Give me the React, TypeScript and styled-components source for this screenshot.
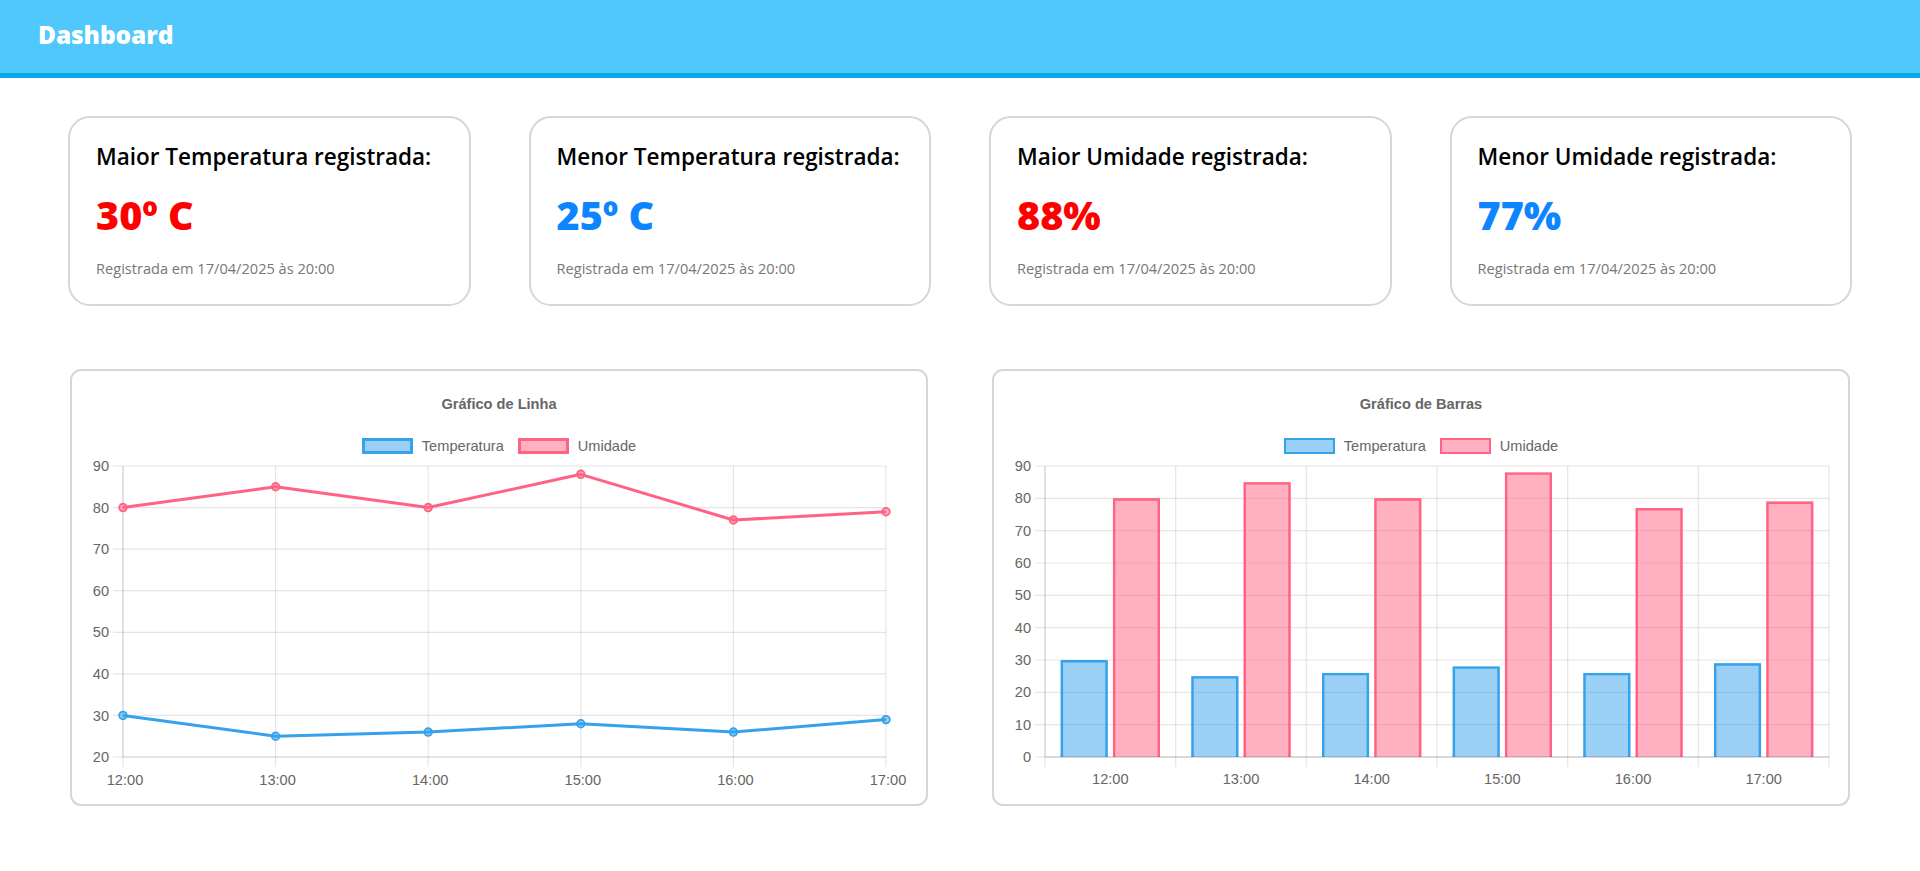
import React from "react";
import styled, { createGlobalStyle } from "styled-components";

const GlobalStyle = createGlobalStyle`
  html, body { margin: 0; padding: 0; background: #ffffff; }
  body { font-family: "Open Sans", "Liberation Sans", sans-serif; }
  * { box-sizing: border-box; }
`;

const Header = styled.header`
  height: 78px;
  background: #50c8fd;
  border-bottom: 5px solid #05aaee;
  display: flex;
  align-items: center;
  padding: 0 38px 4px;
`;

const Brand = styled.h1`
  margin: 0;
  font-family: "Open Sans", sans-serif;
  font-weight: 800;
  font-size: 24.5px;
  color: #ffffff;
  letter-spacing: -0.1px;
`;

const StatsRow = styled.section`
  display: grid;
  grid-template-columns: repeat(4, 1fr);
  gap: 58px;
  padding: 38px 68px 0;
`;

const StatCard = styled.div`
  height: 190px;
  border: 2px solid #d6d6d6;
  border-radius: 22px;
  padding: 24px 26px 0;
  display: flex;
  flex-direction: column;
`;

const StatTitle = styled.h2`
  margin: 0;
  font-family: "Open Sans", sans-serif;
  font-weight: 600;
  font-size: 22.5px;
  line-height: 30px;
  color: #000;
`;

const StatValue = styled.div<{ $tone: "hot" | "cold" }>`
  margin-top: 19px;
  font-family: "Open Sans", sans-serif;
  font-weight: 800;
  font-size: 39.5px;
  line-height: 48px;
  color: ${(p) => (p.$tone === "hot" ? "#ff0000" : "#0d85ff")};
`;

const StatNote = styled.p`
  margin: 19px 0 0;
  font-family: "Open Sans", sans-serif;
  font-size: 14.6px;
  line-height: 20px;
  color: #777;
`;

const ChartsRow = styled.section`
  display: grid;
  grid-template-columns: 858px 858px;
  justify-content: space-between;
  padding: 63px 70px 0;
`;

const ChartCard = styled.div`
  height: 437px;
  border: 2px solid #d6d6d6;
  border-radius: 11px;
  display: flex;
  flex-direction: column;
`;

const ChartTitle = styled.div`
  padding-top: 24px;
  height: 42px;
  text-align: center;
  font-family: "Liberation Sans", Arial, sans-serif;
  font-weight: 700;
  font-size: 14.6px;
  line-height: 18px;
  color: #666;
`;

const Legend = styled.div`
  margin-top: 24px;
  height: 18px;
  display: flex;
  justify-content: center;
  align-items: center;
  gap: 14px;
`;

const LegendItem = styled.div`
  display: flex;
  align-items: center;
  gap: 9px;
  font-family: "Liberation Sans", Arial, sans-serif;
  font-size: 14.6px;
  line-height: 18px;
  color: #666;
`;

const LegendBox = styled.span<{ $color: string; $fill: string; $bw: number }>`
  width: 51px;
  height: 16px;
  background: ${(p) => p.$fill};
  border: ${(p) => p.$bw}px solid ${(p) => p.$color};
`;

const Plot = styled.svg`
  display: block;
  flex: 0 0 auto;
`;

const BLUE = "rgb(54,162,235)";
const BLUE_F = "rgba(54,162,235,0.5)";
const PINK = "rgb(255,99,132)";
const PINK_F = "rgba(255,99,132,0.5)";
const GRID = "rgba(0,0,0,0.1)";
const TICK = "#666";

const labels = ["12:00", "13:00", "14:00", "15:00", "16:00", "17:00"];
const temps = [30, 25, 26, 28, 26, 29];
const hums = [80, 85, 80, 88, 77, 79];

const stats = [
  { title: "Maior Temperatura registrada:", value: "30º C", tone: "hot" as const },
  { title: "Menor Temperatura registrada:", value: "25º C", tone: "cold" as const },
  { title: "Maior Umidade registrada:", value: "88%", tone: "hot" as const },
  { title: "Menor Umidade registrada:", value: "77%", tone: "cold" as const },
];

const SVG_W = 854;
const SVG_H = 349;
const TOP = 11;
const BOTTOM = 302;
const TICK_LEN = 10;
const FONT = '"Liberation Sans", Arial, sans-serif';

function LineChart() {
  const left = 51;
  const right = 814;
  const min = 20;
  const max = 90;
  const y = (v: number) => TOP + ((max - v) / (max - min)) * (BOTTOM - TOP);
  const x = (i: number) => left + (i * (right - left)) / 5;
  const ticks = [20, 30, 40, 50, 60, 70, 80, 90];
  const path = (d: number[]) => d.map((v, i) => `${i ? "L" : "M"}${x(i)},${y(v)}`).join(" ");
  return (
    <Plot width={SVG_W} height={SVG_H} viewBox={`0 0 ${SVG_W} ${SVG_H}`}>
      {ticks.map((t) => (
        <g key={t}>
          <line x1={left - TICK_LEN} x2={right} y1={y(t)} y2={y(t)} stroke={GRID} strokeWidth={1.2} />
          <text x={left - 14} y={y(t)} dy="0.35em" textAnchor="end" fontFamily={FONT} fontSize={14.6} fill={TICK}>
            {t}
          </text>
        </g>
      ))}
      {labels.map((l, i) => (
        <g key={l}>
          <line x1={x(i)} x2={x(i)} y1={TOP} y2={BOTTOM + TICK_LEN} stroke={GRID} strokeWidth={1.2} />
          <text x={x(i) + 2} y={BOTTOM + 23} dy="0.35em" textAnchor="middle" fontFamily={FONT} fontSize={14.6} fill={TICK}>
            {l}
          </text>
        </g>
      ))}
      <line x1={left} x2={left} y1={TOP} y2={BOTTOM} stroke={GRID} strokeWidth={1.2} />
      <line x1={left} x2={right} y1={BOTTOM} y2={BOTTOM} stroke={GRID} strokeWidth={1.2} />
      <path d={path(hums)} fill="none" stroke={PINK} strokeWidth={3} strokeLinejoin="round" />
      <path d={path(temps)} fill="none" stroke={BLUE} strokeWidth={3} strokeLinejoin="round" />
      {hums.map((v, i) => (
        <circle key={`h${i}`} cx={x(i)} cy={y(v)} r={3.8} fill={PINK_F} stroke={PINK} strokeWidth={1.8} />
      ))}
      {temps.map((v, i) => (
        <circle key={`t${i}`} cx={x(i)} cy={y(v)} r={3.8} fill={BLUE_F} stroke={BLUE} strokeWidth={1.8} />
      ))}
    </Plot>
  );
}

function BarChart() {
  const left = 51;
  const right = 835;
  const max = 90;
  const y = (v: number) => TOP + ((max - v) / max) * (BOTTOM - TOP);
  const cat = (right - left) / 6;
  const slot = (cat * 0.8) / 2;
  const bw = slot * 0.9;
  const ticks = [0, 10, 20, 30, 40, 50, 60, 70, 80, 90];
  const bar = (i: number, s: number, v: number, stroke: string, fill: string) => {
    const bx = left + i * cat + cat * 0.1 + s * slot + (slot - bw) / 2;
    const by = y(v);
    const h = BOTTOM - by;
    const b = 1.2;
    return (
      <g key={`${i}-${s}`}>
        <rect x={bx} y={by} width={bw} height={h} fill={fill} />
        <path
          d={`M${bx + b},${BOTTOM} L${bx + b},${by + b} L${bx + bw - b},${by + b} L${bx + bw - b},${BOTTOM}`}
          fill="none"
          stroke={stroke}
          strokeWidth={2.4}
        />
      </g>
    );
  };
  return (
    <Plot width={SVG_W} height={SVG_H} viewBox={`0 0 ${SVG_W} ${SVG_H}`}>
      {ticks.map((t) => (
        <g key={t}>
          <line x1={left - TICK_LEN} x2={right} y1={y(t)} y2={y(t)} stroke={GRID} strokeWidth={1.2} />
          <text x={left - 14} y={y(t)} dy="0.35em" textAnchor="end" fontFamily={FONT} fontSize={14.6} fill={TICK}>
            {t}
          </text>
        </g>
      ))}
      {Array.from({ length: 7 }).map((_, i) => (
        <line
          key={`v${i}`}
          x1={left + i * cat}
          x2={left + i * cat}
          y1={TOP}
          y2={BOTTOM + TICK_LEN}
          stroke={GRID}
          strokeWidth={1.2}
        />
      ))}
      <line x1={left} x2={left} y1={TOP} y2={BOTTOM} stroke={GRID} strokeWidth={1.2} />
      {labels.map((l, i) => (
        <text
          key={l}
          x={left + i * cat + cat / 2}
          y={BOTTOM + 22}
          dy="0.35em"
          textAnchor="middle"
          fontFamily={FONT}
          fontSize={14.6}
          fill={TICK}
        >
          {l}
        </text>
      ))}
      {temps.map((v, i) => bar(i, 0, v, BLUE, BLUE_F))}
      {hums.map((v, i) => bar(i, 1, v, PINK, PINK_F))}
      <line x1={left} x2={right} y1={BOTTOM} y2={BOTTOM} stroke="rgba(0,0,0,0.2)" strokeWidth={1.2} />
    </Plot>
  );
}

function ChartPanel({ title, bw, children }: { title: string; bw: number; children: React.ReactNode }) {
  return (
    <ChartCard>
      <ChartTitle>{title}</ChartTitle>
      <Legend>
        <LegendItem>
          <LegendBox $color={BLUE} $fill={BLUE_F} $bw={bw} />
          Temperatura
        </LegendItem>
        <LegendItem>
          <LegendBox $color={PINK} $fill={PINK_F} $bw={bw} />
          Umidade
        </LegendItem>
      </Legend>
      {children}
    </ChartCard>
  );
}

export default function App() {
  return (
    <>
      <GlobalStyle />
      <Header>
        <Brand>Dashboard</Brand>
      </Header>
      <StatsRow>
        {stats.map((s) => (
          <StatCard key={s.title}>
            <StatTitle>{s.title}</StatTitle>
            <StatValue $tone={s.tone}>{s.value}</StatValue>
            <StatNote>Registrada em 17/04/2025 às 20:00</StatNote>
          </StatCard>
        ))}
      </StatsRow>
      <ChartsRow>
        <ChartPanel title="Gráfico de Linha" bw={3}>
          <LineChart />
        </ChartPanel>
        <ChartPanel title="Gráfico de Barras" bw={2.5}>
          <BarChart />
        </ChartPanel>
      </ChartsRow>
    </>
  );
}
